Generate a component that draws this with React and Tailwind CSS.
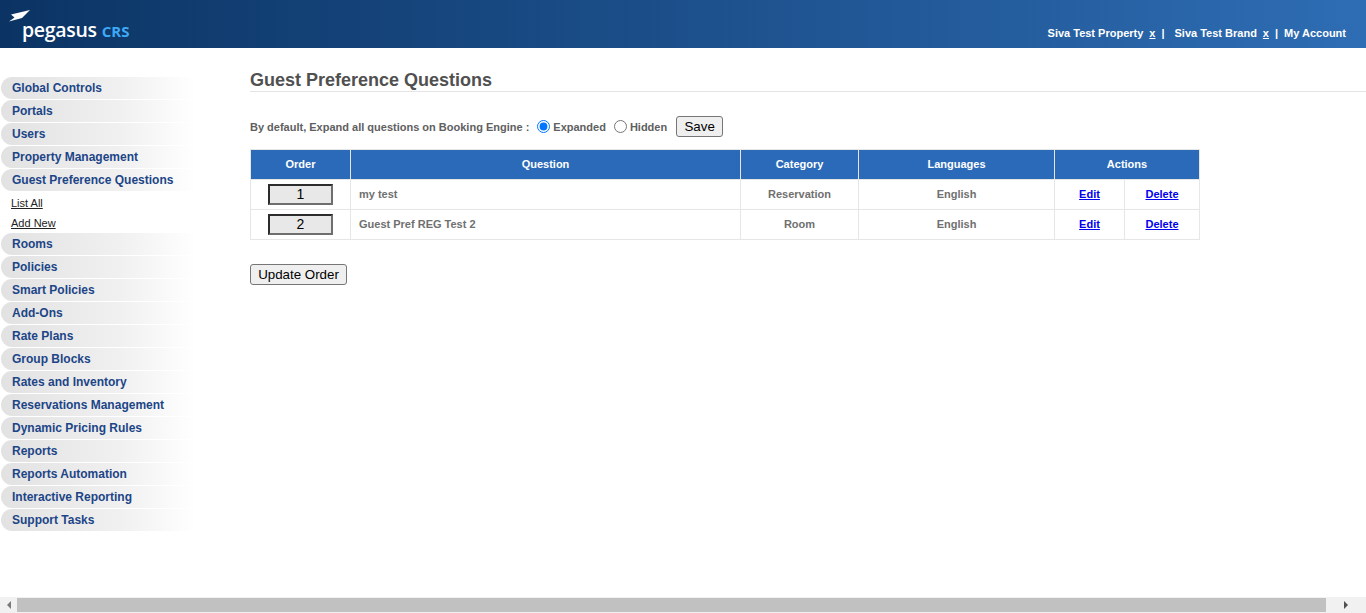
const menuTop = [
  "Global Controls",
  "Portals",
  "Users",
  "Property Management",
  "Guest Preference Questions",
];

const menuBottom = [
  "Rooms",
  "Policies",
  "Smart Policies",
  "Add-Ons",
  "Rate Plans",
  "Group Blocks",
  "Rates and Inventory",
  "Reservations Management",
  "Dynamic Pricing Rules",
  "Reports",
  "Reports Automation",
  "Interactive Reporting",
  "Support Tasks",
];

const questions = [
  { order: 1, question: "my test", category: "Reservation" },
  { order: 2, question: "Guest Pref REG Test 2", category: "Room" },
];

function MenuItem({ label }) {
  return (
    <a className="block h-[22px] w-[195px] mb-px ml-px pl-[11px] rounded-l-[11px] bg-gradient-to-r from-[#e2e2e2] via-[#f0f0f0] via-60% to-white text-[12px] leading-[22px] font-bold text-[#1c4587]">
      {label}
    </a>
  );
}

function Logo() {
  return (
    <div className="flex flex-col pl-[9px] pt-[10px]">
      <svg width="22" height="13" viewBox="0 0 22 13" className="block">
        <path d="M2 4.5 L21 0 L13 8 L0 11.5 L5.5 7.5 Z" fill="#ffffff" />
      </svg>
      <div className="flex items-baseline pl-[13px] -mt-[3px] h-[20px]">
        <span className="font-['Open_Sans',sans-serif] text-[19.5px] font-semibold leading-[20px] text-white tracking-[-0.3px]">
          pegasus
        </span>
        <span className="ml-[5px] font-['Open_Sans',sans-serif] text-[15px] font-bold leading-[20px] text-[#3fa9f5]">
          CRS
        </span>
      </div>
    </div>
  );
}

export default function App() {
  return (
    <div className="flex h-[613px] flex-col overflow-hidden bg-white font-['Liberation_Sans',Arial,sans-serif]">
      <header className="flex h-[48px] shrink-0 justify-between bg-gradient-to-r from-[#0b3464] to-[#2e6db4]">
        <Logo />
        <div className="flex items-end pb-[8px] pr-[20px] text-[11px] leading-[13px] font-bold text-white">
          <span>Siva Test Property</span>
          <a className="ml-[6px] underline">x</a>
          <span className="ml-[6px]">|</span>
          <span className="ml-[10px]">Siva Test Brand</span>
          <a className="ml-[6px] underline">x</a>
          <span className="ml-[6px]">|</span>
          <span className="ml-[6px]">My Account</span>
        </div>
      </header>

      <div className="flex flex-1">
        <aside className="w-[250px] shrink-0 pt-[29px]">
          {menuTop.map((m) => (
            <MenuItem key={m} label={m} />
          ))}
          <div className="flex h-[41px] flex-col pl-[11px] pt-[5px] text-[11px] text-[#222222]">
            <a className="h-[20px] leading-[13px] underline">List All</a>
            <a className="leading-[13px] underline">Add New</a>
          </div>
          {menuBottom.map((m) => (
            <MenuItem key={m} label={m} />
          ))}
        </aside>

        <main className="flex-1 pt-[22px]">
          <h1 className="h-[21px] border-b border-[#e4e4e4] text-[18px] leading-[21px] font-bold text-[#505050] box-content">
            Guest Preference Questions
          </h1>

          <div className="mt-[24px] flex h-[22px] items-center text-[11px] font-bold text-[#606060]">
            <span>By default, Expand all questions on Booking Engine :</span>
            <input type="radio" name="def" defaultChecked className="ml-[8px] h-[13px] w-[13px] -translate-y-[1px] accent-[#0075ff]" />
            <span className="ml-[3px]">Expanded</span>
            <input type="radio" name="def" className="ml-[8px] h-[13px] w-[13px] -translate-y-[1px]" />
            <span className="ml-[3px]">Hidden</span>
            <button className="ml-[9px] h-[21px] w-[47px] self-start rounded-[3px] border border-[#767676] bg-[#efefef] text-[13.33px] font-normal text-black">
              Save
            </button>
          </div>

          <table className="mt-[11px] w-[949px] table-fixed border-collapse text-[11px] font-bold text-[#707070]">
            <colgroup>
              <col className="w-[100px]" />
              <col className="w-[390px]" />
              <col className="w-[118px]" />
              <col className="w-[196px]" />
              <col className="w-[70px]" />
              <col className="w-[75px]" />
            </colgroup>
            <thead>
              <tr className="h-[30px] bg-[#2a6ab8] text-white">
                <th className="border border-[#e6e6e6]">Order</th>
                <th className="border border-[#e6e6e6]">Question</th>
                <th className="border border-[#e6e6e6]">Category</th>
                <th className="border border-[#e6e6e6]">Languages</th>
                <th colSpan={2} className="border border-[#e6e6e6]">Actions</th>
              </tr>
            </thead>
            <tbody>
              {questions.map((q) => (
                <tr key={q.order} className="h-[30px]">
                  <td className="border border-[#e6e6e6] text-center">
                    <input
                      defaultValue={q.order}
                      className="block mx-auto h-[21px] w-[65px] border-2 border-t-[#2b2b2b] border-l-[#2b2b2b] border-r-[#6e6e6e] border-b-[#6e6e6e] bg-[#e8e8e8] text-center text-[14px] font-normal text-black"
                    />
                  </td>
                  <td className="border border-[#e6e6e6] pl-[8px]">{q.question}</td>
                  <td className="border border-[#e6e6e6] text-center">{q.category}</td>
                  <td className="border border-[#e6e6e6] text-center">English</td>
                  <td className="border border-[#e6e6e6] text-center">
                    <a className="text-[#0000ee] underline">Edit</a>
                  </td>
                  <td className="border border-[#e6e6e6] text-center">
                    <a className="text-[#0000ee] underline">Delete</a>
                  </td>
                </tr>
              ))}
            </tbody>
          </table>

          <button className="mt-[24px] block h-[21px] w-[97px] rounded-[3px] border border-[#767676] bg-[#efefef] text-[13.33px] text-black">
            Update Order
          </button>
        </main>
      </div>

      <div className="flex h-[16px] shrink-0 items-center bg-[#f1f1f1]">
        <div className="flex w-[17px] justify-center">
          <div className="h-0 w-0 border-y-[4px] border-r-[4px] border-y-transparent border-r-[#7a7a7a]" />
        </div>
        <div className="h-[14px] w-[1309px] bg-[#c1c1c1]" />
        <div className="flex flex-1 justify-center">
          <div className="h-0 w-0 border-y-[4px] border-l-[4px] border-y-transparent border-l-[#505050]" />
        </div>
      </div>
    </div>
  );
}
